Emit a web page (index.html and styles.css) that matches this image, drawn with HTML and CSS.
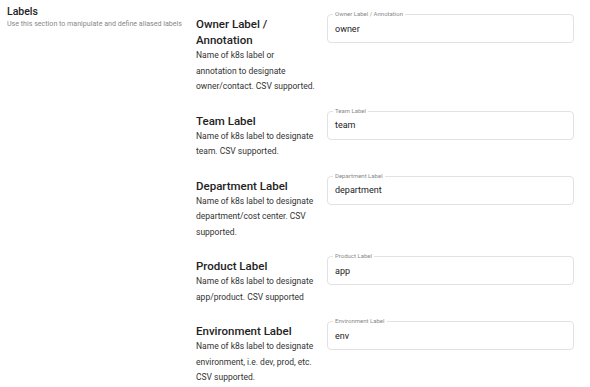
FILE: index.html
```html
<!DOCTYPE html>
<html>
<head>
<meta charset="utf-8">
<link rel="stylesheet" href="styles.css">
</head>
<body>
<div class="page">
  <div class="intro">
    <div class="title">Labels</div>
    <div class="subtitle">Use this section to manipulate and define aliased labels</div>
  </div>
  <div class="fields">
    <div class="row">
      <div class="info">
        <div class="heading">Owner Label / Annotation</div>
        <div class="desc">Name of k8s label or annotation to designate owner/contact. CSV supported.</div>
      </div>
      <div class="field">
        <span class="flabel">Owner Label / Annotation</span>
        <span class="value">owner</span>
      </div>
    </div>
    <div class="row">
      <div class="info">
        <div class="heading">Team Label</div>
        <div class="desc">Name of k8s label to designate team. CSV supported.</div>
      </div>
      <div class="field">
        <span class="flabel">Team Label</span>
        <span class="value">team</span>
      </div>
    </div>
    <div class="row">
      <div class="info">
        <div class="heading">Department Label</div>
        <div class="desc">Name of k8s label to designate department/cost center. CSV supported.</div>
      </div>
      <div class="field">
        <span class="flabel">Department Label</span>
        <span class="value">department</span>
      </div>
    </div>
    <div class="row">
      <div class="info">
        <div class="heading">Product Label</div>
        <div class="desc">Name of k8s label to designate app/product. CSV supported</div>
      </div>
      <div class="field">
        <span class="flabel">Product Label</span>
        <span class="value">app</span>
      </div>
    </div>
    <div class="row">
      <div class="info">
        <div class="heading">Environment Label</div>
        <div class="desc">Name of k8s label to designate environment, i.e. dev, prod, etc. CSV supported.</div>
      </div>
      <div class="field">
        <span class="flabel">Environment Label</span>
        <span class="value">env</span>
      </div>
    </div>
  </div>
</div>
</body>
</html>
```

FILE: styles.css
```css
* { box-sizing: border-box; }
html, body { margin: 0; padding: 0; background: #fff; }
body {
  font-family: Roboto, "Liberation Sans", Arial, sans-serif;
  color: #222;
}
.page {
  display: flex;
  align-items: flex-start;
}
.intro {
  width: 196px;
  padding: 5px 0 0 7px;
}
.title {
  font-size: 10.5px;
  line-height: 13px;
  font-weight: 500;
  color: #222;
}
.subtitle {
  margin-top: 1px;
  font-size: 7.1px;
  line-height: 10px;
  color: #888;
  white-space: nowrap;
}
.fields {
  display: flex;
  flex-direction: column;
  gap: 16px;
  padding-top: 14px;
}
.row {
  display: flex;
  align-items: flex-start;
  gap: 11px;
}
.info {
  width: 120px;
  padding-top: 2px;
}
.heading {
  font-size: 11.5px;
  line-height: 16px;
  font-weight: 500;
  color: #222;
}
.desc {
  font-size: 8.5px;
  line-height: 15.5px;
  color: #333;
}
.field {
  position: relative;
  width: 247px;
  height: 29px;
  border: 1px solid #e2e2e2;
  border-radius: 4px;
  display: flex;
  align-items: center;
  padding: 0 7px;
}
.flabel {
  position: absolute;
  left: 5px;
  top: -5px;
  padding: 0 2px;
  background: #fff;
  font-size: 6px;
  line-height: 8px;
  color: #8a8a8a;
}
.value {
  font-size: 9px;
  color: #222;
}
```
